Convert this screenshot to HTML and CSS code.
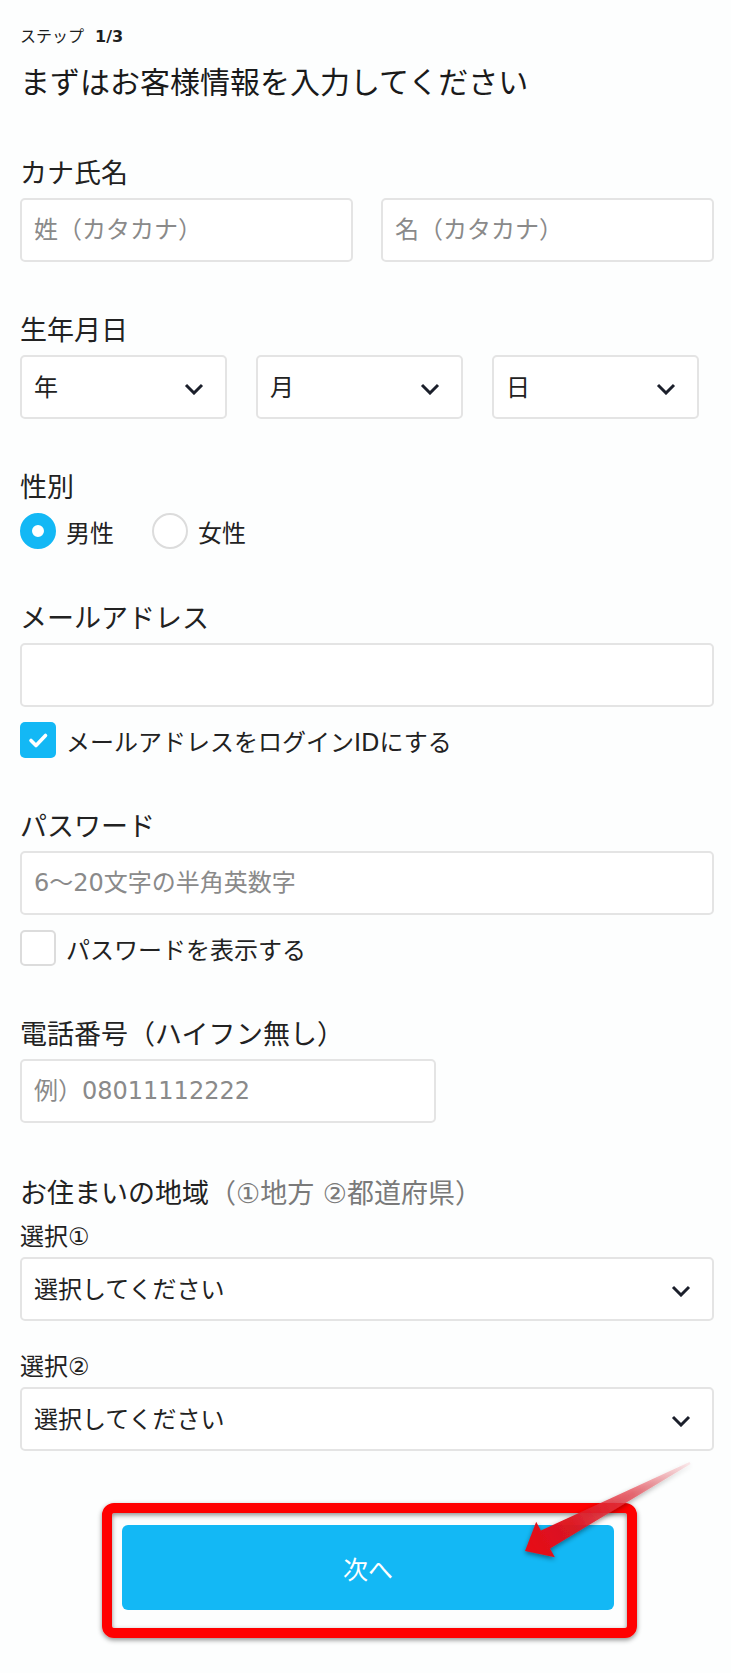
FILE: index.html
```html
<!DOCTYPE html>
<html lang="ja">
<head>
<meta charset="utf-8">
<title>お客様情報入力</title>
<link rel="stylesheet" href="styles.css">
</head>
<body>
<div class="page">
  <div class="step">ステップ <b>1/3</b></div>
  <div class="title">まずはお客様情報を入力してください</div>

  <div class="field">
    <div class="label">カナ氏名</div>
    <div class="row-2">
      <input class="input" type="text" placeholder="姓（カタカナ）">
      <input class="input" type="text" placeholder="名（カタカナ）">
    </div>
  </div>

  <div class="field">
    <div class="label">生年月日</div>
    <div class="row-3">
      <div class="select small"><span>年</span><svg class="chev" viewBox="0 0 20 12" width="20" height="12"><path d="M2 2 L10 10 L18 2" fill="none" stroke="#1b1f2b" stroke-width="3"/></svg></div>
      <div class="select small"><span>月</span><svg class="chev" viewBox="0 0 20 12" width="20" height="12"><path d="M2 2 L10 10 L18 2" fill="none" stroke="#1b1f2b" stroke-width="3"/></svg></div>
      <div class="select small"><span>日</span><svg class="chev" viewBox="0 0 20 12" width="20" height="12"><path d="M2 2 L10 10 L18 2" fill="none" stroke="#1b1f2b" stroke-width="3"/></svg></div>
    </div>
  </div>

  <div class="field">
    <div class="label">性別</div>
    <div class="radios">
      <label class="radio-item"><span class="radio on"></span><span>男性</span></label>
      <label class="radio-item"><span class="radio"></span><span>女性</span></label>
    </div>
  </div>

  <div class="field">
    <div class="label">メールアドレス</div>
    <input class="input full" type="text">
    <label class="check-row"><span class="check on"><svg viewBox="0 0 36 36" width="36" height="36"><path d="M11 18.5 L16 23.5 L25.5 13.5" fill="none" stroke="#fff" stroke-width="3.6" stroke-linecap="round" stroke-linejoin="round"/></svg></span><span>メールアドレスをログインIDにする</span></label>
  </div>

  <div class="field">
    <div class="label">パスワード</div>
    <input class="input full" type="text" placeholder="6〜20文字の半角英数字">
    <label class="check-row"><span class="check"></span><span>パスワードを表示する</span></label>
  </div>

  <div class="field phone-field">
    <div class="label">電話番号（ハイフン無し）</div>
    <input class="input phone" type="text" placeholder="例）08011112222">
  </div>

  <div class="field last">
    <div class="label">お住まいの地域<span class="muted">（①地方 ②都道府県）</span></div>
    <div class="sublabel">選択①</div>
    <div class="select full"><span>選択してください</span><svg class="chev" viewBox="0 0 20 12" width="20" height="12"><path d="M2 2 L10 10 L18 2" fill="none" stroke="#1b1f2b" stroke-width="3"/></svg></div>
    <div class="sublabel second">選択②</div>
    <div class="select full"><span>選択してください</span><svg class="chev" viewBox="0 0 20 12" width="20" height="12"><path d="M2 2 L10 10 L18 2" fill="none" stroke="#1b1f2b" stroke-width="3"/></svg></div>
  </div>

  <div class="btn-wrap">
    <button class="next" type="button">次へ</button>
  </div>

  <svg class="annot" viewBox="0 0 731 1673" width="731" height="1673">
    <defs>
      <filter id="sh" x="-20%" y="-20%" width="140%" height="140%">
        <feDropShadow dx="0" dy="2" stdDeviation="2.5" flood-color="#000" flood-opacity="0.45"/>
      </filter>
      <linearGradient id="ag" x1="690" y1="1463" x2="525" y2="1551" gradientUnits="userSpaceOnUse">
        <stop offset="0" stop-color="#f07a84" stop-opacity="0.15"/>
        <stop offset="0.35" stop-color="#e8404c" stop-opacity="0.7"/>
        <stop offset="0.7" stop-color="#de1420" stop-opacity="0.95"/>
        <stop offset="1" stop-color="#e80c14"/>
      </linearGradient>
    </defs>
    <rect x="107" y="1508" width="525" height="125" rx="7" ry="7" fill="none" stroke="#ff0000" stroke-width="10" filter="url(#sh)"/>
    <polygon points="689.5,1462.1 540.9,1530.6 536.2,1521.8 525,1551 554.8,1557.2 550.1,1548.4 690.5,1463.9" fill="url(#ag)" filter="url(#sh)"/>
  </svg>
</div>
</body>
</html>
```

FILE: styles.css
```css
html, body {
  margin: 0;
  padding: 0;
  background: #fdfefe;
}

body {
  font-family: "DejaVu Sans", "Noto Sans CJK JP", sans-serif;
  color: #1e1e1e;
}

.page {
  position: relative;
  width: 731px;
  box-sizing: border-box;
  padding: 25px 17px 63px 20px;
}

.step {
  font-size: 16px;
  line-height: 24px;
}

.step b {
  margin-left: 6px;
  font-weight: 700;
}

.title {
  margin: 14px 0 53px;
  font-size: 30px;
  line-height: 40px;
  font-weight: 400;
  color: #1a1a1a;
  white-space: nowrap;
}

.field {
  margin-bottom: 51px;
}

.field.phone-field {
  margin-bottom: 53px;
}

.field.last {
  margin-bottom: 0;
}

.label {
  font-size: 27px;
  line-height: 36px;
  margin-bottom: 6px;
  color: #222;
}

.muted {
  color: #7a7a7a;
}

.input {
  display: block;
  box-sizing: border-box;
  height: 64px;
  border: 2px solid #e4e4e4;
  border-radius: 5px;
  background: #fff;
  padding: 0 12px;
  font-family: inherit;
  font-size: 24px;
  color: #222;
  outline: none;
  min-width: 0;
}

.input::placeholder {
  color: #8a8a8a;
}

.input.full {
  width: 100%;
}

.input.phone {
  width: 416px;
}

.row-2 {
  display: flex;
  gap: 28px;
}

.row-2 .input {
  flex: 1;
}

.row-3 {
  display: flex;
  gap: 29px;
}

.select {
  box-sizing: border-box;
  height: 64px;
  border: 2px solid #e4e4e4;
  border-radius: 5px;
  background: #fff;
  padding: 0 21px 0 12px;
  display: flex;
  align-items: center;
  justify-content: space-between;
  font-size: 24px;
  color: #222;
}

.select span {
  margin-top: -4px;
}

.select .chev {
  margin-top: 4px;
}

.select.small {
  width: 207px;
}

.select.full {
  width: 100%;
}

.radios {
  display: flex;
  align-items: center;
  height: 38px;
  gap: 38px;
}

.radio-item {
  display: flex;
  align-items: center;
  gap: 10px;
  font-size: 24px;
  color: #222;
}

.radio {
  box-sizing: border-box;
  width: 36px;
  height: 36px;
  border-radius: 50%;
  border: 2.5px solid #dcdcdc;
  background: #fff;
}

.radio.on {
  border: 12px solid #13b8f5;
}

.check-row {
  margin-top: 15px;
  display: flex;
  align-items: center;
  gap: 10px;
  height: 36px;
  font-size: 24px;
  color: #222;
}

.check {
  box-sizing: border-box;
  width: 36px;
  height: 36px;
  border-radius: 5px;
  border: 2px solid #dcdcdc;
  background: #fff;
  flex: none;
}

.check.on {
  border: none;
  background: #13b8f5;
}

.check svg {
  display: block;
}

.sublabel {
  font-size: 24px;
  line-height: 30px;
  margin: 10px 0 5px;
  color: #222;
}

.sublabel.second {
  margin-top: 31px;
}

.btn-wrap {
  display: flex;
  justify-content: center;
  margin-top: 74px;
}

.next {
  width: 492px;
  height: 85px;
  border: none;
  border-radius: 6px;
  background: #13b8f5;
  color: #fff;
  font-family: inherit;
  font-size: 25px;
  margin-left: 2px;
}

.annot {
  position: absolute;
  left: 0;
  top: 0;
  pointer-events: none;
}
```
